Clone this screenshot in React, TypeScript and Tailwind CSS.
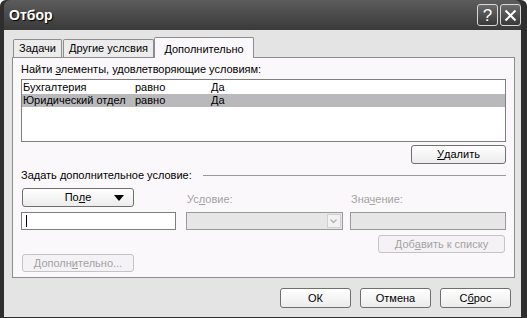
import React, { ReactElement } from 'react'

const font = { fontFamily: '"Liberation Sans", "DejaVu Sans", sans-serif' }

interface BtnProps {
  children: React.ReactNode
  className?: string
  disabled?: boolean
}
function Btn({ children, className = '', disabled }: BtnProps): ReactElement {
  return (
    <div
      className={`flex items-center justify-center rounded-[3px] border text-[11px] ${
        disabled
          ? 'border-[#c4c4c4] bg-[#f4f2f4] text-[#a3a3a3]'
          : 'border-[#6f6f6f] bg-gradient-to-b from-[#ffffff] to-[#ececec] text-black'
      } ${className}`}
    >
      {children}
    </div>
  )
}

function TitleButton({ children }: { children: React.ReactNode }): ReactElement {
  return (
    <div className="flex h-[22px] w-[21px] items-center justify-center rounded-[3px] border border-[#d8d8d8] bg-gradient-to-b from-[#6a6a6a] to-[#3a3a3a] text-white">
      {children}
    </div>
  )
}

const rows = [
  ['Бухгалтерия', 'равно', 'Да'],
  ['Юридический отдел', 'равно', 'Да'],
]

export default function App(): ReactElement {
  return (
    <div
      className="flex h-[318px] w-[527px] flex-col rounded-t-[6px] bg-[#2e2e2e] pb-[1px] pl-[4px] pr-[6px]"
      style={font}
    >
      {/* title bar */}
      <div className="flex h-[30px] items-center justify-between rounded-t-[6px] bg-gradient-to-b from-[#5c5c5c] to-[#3a3a3a] pl-[5px] pr-0">
        <div className="text-[14px] font-bold text-white [text-shadow:1px_1px_1px_#000]">
          Отбор
        </div>
        <div className="flex gap-[2px]">
          <TitleButton>
            <span className="text-[17px] leading-none">?</span>
          </TitleButton>
          <TitleButton>
            <svg width="13" height="13" viewBox="0 0 13 13">
              <path d="M1.5 1.5 L11.5 11.5 M11.5 1.5 L1.5 11.5" stroke="white" strokeWidth="2" />
            </svg>
          </TitleButton>
        </div>
      </div>

      {/* body */}
      <div className="flex flex-1 flex-col bg-[#e4e4e4] pl-[8px] pr-[6px] pt-[7px]">
        {/* tabs */}
        <div className="flex items-end pl-[1px] text-[11px] text-black">
          <div className="flex h-[18px] w-[49px] items-center justify-center rounded-t-[2px] border border-b-0 border-[#8d8d8d] bg-[#ececec]">
            Задачи
          </div>
          <div className="ml-[1px] flex h-[18px] w-[91px] items-center justify-center rounded-t-[2px] border border-b-0 border-[#8d8d8d] bg-[#ececec]">
            Другие услсвия
          </div>
          <div className="relative -mb-[1px] flex h-[21px] w-[100px] items-start justify-center rounded-t-[2px] border border-b-0 border-[#8d8d8d] bg-[#fbf8fb] pt-[3px]">
            Дополнительно
          </div>
        </div>

        {/* panel */}
        <div className="flex h-[221px] flex-col border border-[#8d8d8d] bg-[#fbf8fb] pl-[8px] pr-[8px] pt-[4px] text-[11px] text-black">
          <div className="h-[14px] leading-[14px]">
            Найти <span className="underline">э</span>лементы, удовлетворяющие условиям:
          </div>
          <div className="mt-[3px] h-[63px] border border-[#7f7f7f] bg-white pt-[1px]">
            {rows.map((r, i) => (
              <div
                key={r[0]}
                className={`flex h-[13px] items-center pl-[1px] leading-[13px] ${
                  i === 1 ? 'bg-[#b9b9bc]' : ''
                }`}
              >
                <div className="w-[112px]">{r[0]}</div>
                <div className="w-[76px]">{r[1]}</div>
                <div>{r[2]}</div>
              </div>
            ))}
          </div>
          <div className="mt-[3px] flex justify-end">
            <Btn className="h-[19px] w-[95px]">
              <span className="underline">У</span>далить
            </Btn>
          </div>

          <div className="mt-[3px] flex items-center">
            <div className="whitespace-nowrap">Задать дополнительное условие:</div>
            <div className="ml-[11px] h-px flex-1 bg-[#9a9a9a]" />
          </div>

          <div className="mt-[4px] flex">
            <div className="w-[166px]">
              <Btn className="relative ml-[1px] h-[19px] w-[112px]">
                По<span className="underline">л</span>е
                <svg className="absolute right-[9px] top-[6px]" width="10" height="6" viewBox="0 0 10 6">
                  <path d="M0 0 L10 0 L5 6 Z" fill="black" />
                </svg>
              </Btn>
            </div>
            <div className="w-[164px] pt-[3px] text-[#a3a3a3]">
              Ус<span className="underline">л</span>овие:
            </div>
            <div className="pt-[3px] text-[#a3a3a3]">
              Зна<span className="underline">ч</span>ение:
            </div>
          </div>

          <div className="mt-[5px] flex">
            <div className="flex h-[18px] w-[156px] items-center border border-[#7f7f7f] bg-white pl-[4px]">
              <div className="h-[12px] w-px bg-black" />
            </div>
            <div className="ml-[10px] flex h-[18px] w-[157px] items-center justify-end border border-[#9a9a9a] bg-[#e6e6e6] pr-[1px]">
              <div className="flex h-[14px] w-[14px] items-center justify-center border border-[#d0d0d0] bg-[#f2f2f2]">
                <svg width="7" height="5" viewBox="0 0 7 5">
                  <path d="M0.5 0.5 L3.5 3.5 L6.5 0.5" stroke="#b0b0b0" strokeWidth="1.3" fill="none" />
                </svg>
              </div>
            </div>
            <div className="ml-[7px] h-[18px] w-[157px] border border-[#9a9a9a] bg-[#e6e6e6]" />
          </div>

          <div className="mt-[5px] flex justify-end pr-[1px]">
            <Btn disabled className="h-[18px] w-[127px]">
              Доб<span className="underline">а</span>вить к списку
            </Btn>
          </div>
          <div className="mt-px">
            <Btn disabled className="ml-[1px] h-[18px] w-[112px]">
              Дополн<span className="underline">и</span>тельно...
            </Btn>
          </div>
        </div>

        {/* footer buttons */}
        <div className="mt-[10px] flex justify-end gap-[9px] pr-[4px]">
          <Btn className="h-[20px] w-[71px]">ОК</Btn>
          <Btn className="h-[20px] w-[71px]">Отмена</Btn>
          <Btn className="h-[20px] w-[71px]">
            С<span className="underline">б</span>рос
          </Btn>
        </div>
      </div>
    </div>
  )
}
